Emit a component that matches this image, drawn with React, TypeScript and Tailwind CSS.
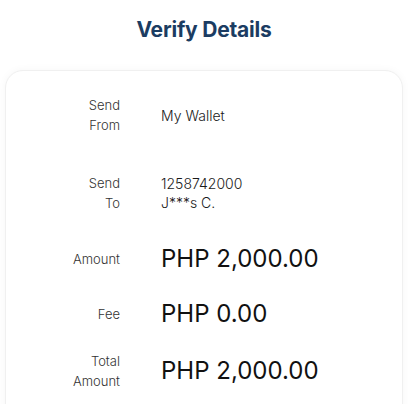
export default function App() {
  return (
    <div className="min-h-screen bg-white font-['Inter',sans-serif] overflow-hidden">
      <h1 className="pt-[16px] text-center text-[21px] font-bold leading-[27px] tracking-[-0.01em] text-[#1b3c62]">
        Verify Details
      </h1>
      <div className="mx-[5px] mt-[27px] rounded-t-[18px] border border-[#f0f0f0] bg-white pb-10 pt-[24px] shadow-[0_0_8px_rgba(0,0,0,0.04)]">
        <Row label={["Send", "From"]}>
          <span className="text-[14px] font-light leading-[20px] text-[#1a1a1a]">My Wallet</span>
        </Row>
        <Row label={["Send", "To"]} className="mt-[38px]">
          <div className="text-[14px] font-light leading-[19px] text-[#1a1a1a]">
            <div>1258742000</div>
            <div>J***s C.</div>
          </div>
        </Row>
        <Row label={["Amount"]} className="mt-[30px]">
          <Big>PHP 2,000.00</Big>
        </Row>
        <Row label={["Fee"]} className="mt-[23px]">
          <Big>PHP 0.00</Big>
        </Row>
        <Row label={["Total", "Amount"]} className="mt-[21px]">
          <Big>PHP 2,000.00</Big>
        </Row>
      </div>
    </div>
  );
}

function Row({
  label,
  children,
  className = "",
}: {
  label: string[];
  children: React.ReactNode;
  className?: string;
}) {
  return (
    <div className={`flex items-center ${className}`}>
      <div className="w-[114px] shrink-0 text-right text-[13px] font-light leading-[20px] text-[#333]">
        {label.map((l) => (
          <div key={l}>{l}</div>
        ))}
      </div>
      <div className="ml-[41px]">{children}</div>
    </div>
  );
}

function Big({ children }: { children: React.ReactNode }) {
  return <span className="text-[24px] leading-[32px] text-[#111]">{children}</span>;
}
